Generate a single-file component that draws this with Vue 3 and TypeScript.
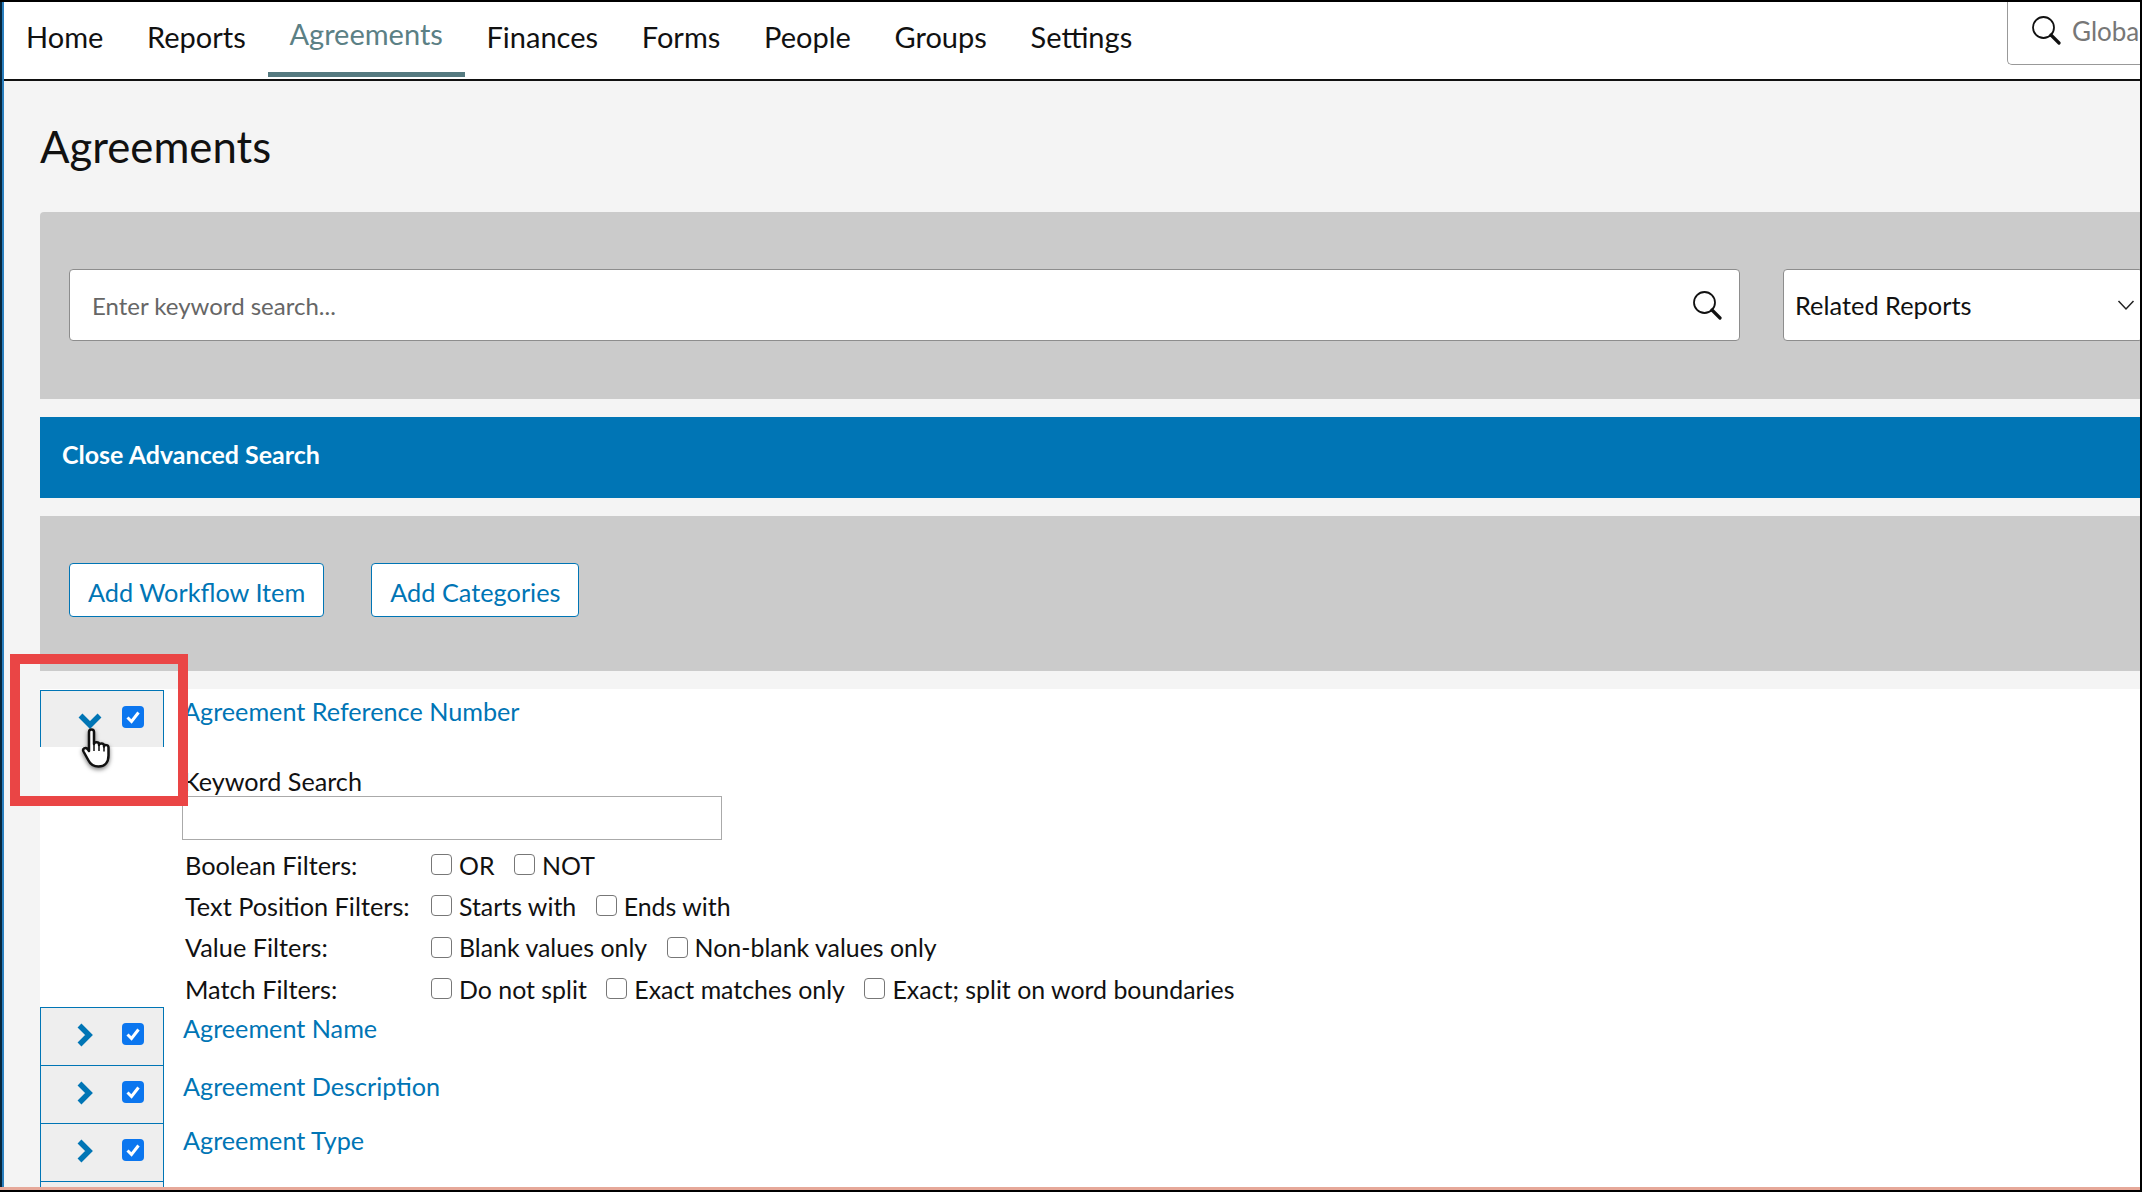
<script setup lang="ts">
const navItems = ['Home', 'Reports', 'Agreements', 'Finances', 'Forms', 'People', 'Groups', 'Settings']

const filters = [
  { label: 'Boolean Filters:', options: ['OR', 'NOT'] },
  { label: 'Text Position Filters:', options: ['Starts with', 'Ends with'] },
  { label: 'Value Filters:', options: ['Blank values only', 'Non-blank values only'] },
  { label: 'Match Filters:', options: ['Do not split', 'Exact matches only', 'Exact; split on word boundaries'] },
]

const fields = [
  { name: 'Agreement Name', offset: 6 },
  { name: 'Agreement Description', offset: 6 },
  { name: 'Agreement Type', offset: 2 },
  { name: '', offset: 0 },
]
</script>

<template>
  <div class="screen">
    <header class="topbar">
      <nav class="nav">
        <a v-for="item in navItems" :key="item" class="nav-item" :class="{ active: item === 'Agreements' }">{{ item }}</a>
      </nav>
      <div class="global-search">
        <svg class="search-icon" viewBox="0 0 30 30">
          <circle cx="12.5" cy="12.5" r="10.5" fill="none" stroke="#111" stroke-width="1.8" />
          <path d="M20 20l8 8" stroke="#111" stroke-width="3.2" stroke-linecap="round" />
        </svg>
        <span>Global</span>
      </div>
    </header>

    <main class="page">
      <h1 class="title">Agreements</h1>

      <section class="panel search-panel">
        <div class="keyword-box">
          <span>Enter keyword search...</span>
          <svg class="search-icon" viewBox="0 0 30 30">
            <circle cx="12.5" cy="12.5" r="10.5" fill="none" stroke="#111" stroke-width="1.8" />
            <path d="M20 20l8 8" stroke="#111" stroke-width="3.2" stroke-linecap="round" />
          </svg>
        </div>
        <div class="report-select">
          <span>Related Reports</span>
          <svg class="select-caret" viewBox="0 0 18 12">
            <path d="M1.5 2l7.5 8 7.5-8" fill="none" stroke="#222" stroke-width="1.5" />
          </svg>
        </div>
      </section>

      <div class="advanced-bar">Close Advanced Search</div>

      <section class="panel action-panel">
        <button class="action">Add Workflow Item</button>
        <button class="action">Add Categories</button>
      </section>

      <section class="fields">
        <div class="field expanded">
          <div class="toggle open">
            <svg class="chevron-down" viewBox="0 0 24 16">
              <path d="M2.500 2.500l9.500 9.500 9.500-9.500" fill="none" stroke="#0075b5" stroke-width="5.500" />
            </svg>
            <span class="checked">
              <svg viewBox="0 0 22 22"><path d="M5.500 11.500l4 4 7-9" fill="none" stroke="#fff" stroke-width="3" /></svg>
            </span>
          </div>
          <div class="field-body">
            <a class="field-link">Agreement Reference Number</a>
            <label class="keyword-label">Keyword Search</label>
            <div class="keyword-input"></div>
            <div class="filter-grid">
              <template v-for="row in filters" :key="row.label">
                <span class="filter-label">{{ row.label }}</span>
                <div class="filter-options">
                  <label v-for="opt in row.options" :key="opt" class="option">
                    <input type="checkbox" />{{ opt }}
                  </label>
                </div>
              </template>
            </div>
          </div>
        </div>

        <div v-for="f in fields" :key="f.name" class="field">
          <div class="toggle">
            <svg class="chevron-right" viewBox="0 0 16 24">
              <path d="M2.500 2.500l9.500 9.500-9.500 9.500" fill="none" stroke="#0075b5" stroke-width="5.500" />
            </svg>
            <span class="checked">
              <svg viewBox="0 0 22 22"><path d="M5.500 11.500l4 4 7-9" fill="none" stroke="#fff" stroke-width="3" /></svg>
            </span>
          </div>
          <a class="field-link" :style="{ marginTop: f.offset + 'px' }">{{ f.name }}</a>
        </div>
      </section>
    </main>

    <div class="highlight"></div>
    <svg class="hand" viewBox="0 0 32 40">
      <path d="M8 4c0-3.500 5-3.500 5 0v12c0-2.500 5-2.500 5 0v1c0-2 5-2 5 .5v1c0-2 4.500-2 4.500 1v8c0 7-4 11-10 11-5 0-8-2-10-6l-5-9c-1.500-3 2-4.500 4-2.500l1.500 2z" fill="#fff" stroke="#111" stroke-width="2.500" stroke-linejoin="round" />
      <path d="M13 16v7M18 17v6M23 18.500v5" stroke="#111" stroke-width="1.500" fill="none" />
    </svg>
    <div class="bottom-strip"></div>
  </div>
</template>

<style scoped>
.screen {
  position: relative;
  width: 2142px;
  height: 1192px;
  box-sizing: border-box;
  overflow: hidden;
  display: flex;
  flex-direction: column;
  padding-left: 4px;
  background: linear-gradient(to right, #06263c 2px, #2a7fbf 2px, #2a7fbf 4px, #f4f4f4 4px);
  border-top: 2px solid #000;
  border-right: 2px solid #000;
  border-bottom: 2px solid #000;
  font-family: Lato, "Open Sans", sans-serif;
  color: #111;
}

.topbar {
  flex: none;
  height: 79px;
  box-sizing: border-box;
  display: flex;
  justify-content: space-between;
  background: #fff;
  border-bottom: 2px solid #111;
}

.nav {
  display: flex;
  padding-left: 1px;
}

.nav-item {
  box-sizing: border-box;
  height: 75px;
  padding: 17px 21.85px 0;
  font-size: 29px;
  line-height: 36px;
}

.nav-item:first-child {
  padding-left: 21px;
}

.nav-item.active {
  padding-top: 14px;
  color: #5b8085;
  border-bottom: 5px solid #557a80;
}

.global-search {
  width: 133px;
  height: 63px;
  box-sizing: border-box;
  display: flex;
  align-items: flex-start;
  gap: 11px;
  padding: 13px 0 0 23px;
  overflow: hidden;
  white-space: nowrap;
  background: #fff;
  border: 1px solid #999;
  border-width: 0 0 1px 1px;
  border-bottom-left-radius: 5px;
  font-size: 26px;
  line-height: 32px;
  color: #777;
}

.search-icon {
  flex: none;
  width: 30px;
  height: 30px;
}

.page {
  flex: 1;
  min-height: 0;
  padding-left: 36px;
}

.title {
  margin: 0;
  padding-top: 38px;
  height: 131px;
  box-sizing: border-box;
  font-size: 43.7px;
  line-height: 54px;
  font-weight: 400;
}

.panel {
  display: flex;
  background: #cbcbcb;
}

.search-panel {
  height: 187px;
  box-sizing: border-box;
  padding: 57px 0 0 29px;
  gap: 43px;
  border-top-left-radius: 4px;
}

.keyword-box,
.report-select {
  box-sizing: border-box;
  height: 72px;
  flex: none;
  display: flex;
  align-items: center;
  justify-content: space-between;
  background: #fff;
  border: 1px solid #8d8d8d;
  border-radius: 4px;
  font-size: 25.4px;
}

.keyword-box {
  width: 1671px;
  padding: 0 17px 0 22px;
  color: #666;
  font-size: 24px;
}

.report-select {
  width: 360px;
  padding: 0 7px 0 11px;
  color: #111;
}

.select-caret {
  width: 18px;
  height: 12px;
}

.advanced-bar {
  margin-top: 18px;
  height: 81px;
  box-sizing: border-box;
  padding: 0 22px 8px;
  display: flex;
  align-items: center;
  background: #0075b5;
  color: #fff;
  font-size: 25px;
  font-weight: 700;
}

.action-panel {
  margin-top: 18px;
  height: 155px;
  box-sizing: border-box;
  padding: 47px 0 0 29px;
  gap: 47px;
  align-items: flex-start;
}

.action {
  height: 54px;
  padding: 3px 18px 0;
  background: #fff;
  border: 1px solid #0075b5;
  border-radius: 4px;
  color: #0075b5;
  font: 400 25.3px Lato, sans-serif;
}

.fields {
  margin-top: 18px;
  background: #fff;
}

.field {
  display: flex;
  height: 58px;
}

.field.expanded {
  height: 317px;
}

.toggle {
  flex: none;
  width: 124px;
  height: 58px;
  margin-top: 1px;
  box-sizing: border-box;
  position: relative;
  display: flex;
  align-items: center;
  background: #eeeeee;
  border: 1px solid #0075b5;
  border-bottom: 0;
}

.toggle.open {
  height: 57px;
}

.chevron-right {
  flex: none;
  width: 16px;
  height: 24px;
  margin: -3px 0 0 36px;
}

.chevron-down {
  flex: none;
  width: 24px;
  height: 16px;
  margin: 4px 0 0 37px;
}

.checked {
  width: 22px;
  height: 22px;
  position: absolute;
  right: 19px;
  top: 15px;
  background: #0b76ef;
  border-radius: 4px;
}

.checked svg {
  display: block;
}

.field-body {
  display: flex;
  flex-direction: column;
}

.field-link {
  display: block;
  padding-left: 19px;
  font-size: 25.2px;
  line-height: 32px;
  color: #0075b5;
}

.field-body .field-link {
  margin-top: 6px;
}

.keyword-label {
  margin-top: 38px;
  padding-left: 19px;
  font-size: 25.2px;
  line-height: 32px;
}

.keyword-input {
  flex: none;
  margin: -1px 0 0 18px;
  width: 540px;
  height: 44px;
  box-sizing: border-box;
  background: #fff;
  border: 1px solid #aaa;
}

.filter-grid {
  display: grid;
  grid-template-columns: 246px auto;
  grid-auto-rows: 41.3px;
  margin: 4px 0 0 21px;
  align-items: center;
  font-size: 25.3px;
  white-space: nowrap;
}

.filter-options {
  display: flex;
  gap: 19.5px;
  font-size: 24.9px;
}

.option {
  display: flex;
  align-items: center;
  gap: 7px;
}

.option input {
  appearance: none;
  width: 21px;
  height: 21px;
  margin: 0;
  background: #fff;
  border: 1px solid #777;
  border-radius: 4px;
}

.highlight {
  position: absolute;
  left: 10px;
  top: 652px;
  width: 178px;
  height: 152px;
  box-sizing: border-box;
  border: 10px solid #ea4545;
}

.hand {
  position: absolute;
  left: 81px;
  top: 726px;
  width: 32px;
  height: 40px;
  filter: drop-shadow(0 2px 2px rgba(0, 0, 0, 0.5));
}

.bottom-strip {
  position: absolute;
  left: 0;
  right: 0;
  bottom: 0;
  height: 3px;
  background: #e6a899;
}
</style>
